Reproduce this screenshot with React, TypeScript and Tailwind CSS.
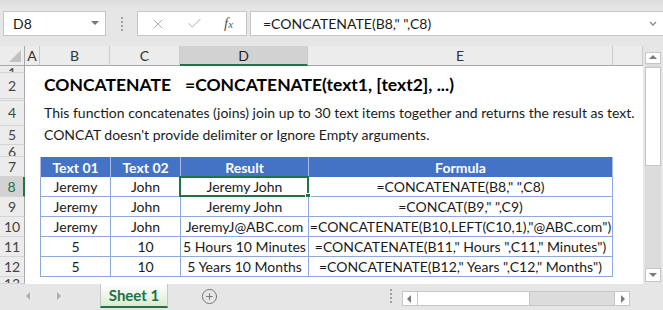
import { Check, X, CirclePlus } from "lucide-react";
import type { ReactNode } from "react";

const cols = [
  { key: "A", w: "w-[15px]" },
  { key: "B", w: "w-[70px]" },
  { key: "C", w: "w-[70px]" },
  { key: "D", w: "w-[128px]" },
  { key: "E", w: "w-[305px]" },
  { key: "", w: "w-[30px]" },
];

const rows = [
  { b: "Jeremy", c: "John", d: "Jeremy John", e: '=CONCATENATE(B8," ",C8)' },
  { b: "Jeremy", c: "John", d: "Jeremy John", e: '=CONCAT(B9," ",C9)' },
  { b: "Jeremy", c: "John", d: "JeremyJ@ABC.com", e: '=CONCATENATE(B10,LEFT(C10,1),"@ABC.com")' },
  { b: "5", c: "10", d: "5 Hours 10 Minutes", e: '=CONCATENATE(B11," Hours ",C11," Minutes")' },
  { b: "5", c: "10", d: "5 Years 10 Months", e: '=CONCATENATE(B12," Years ",C12," Months")' },
];

function Tri({ dir }: { dir: "up" | "down" | "left" | "right" }) {
  const pts = {
    up: "1,6 5,2 9,6",
    down: "1,3 5,7 9,3",
    left: "6,1 2,5 6,9",
    right: "4,1 8,5 4,9",
  }[dir];
  return (
    <svg width="10" height="10" viewBox="0 0 10 10">
      <polygon points={pts} fill="#7a7a7a" />
    </svg>
  );
}

// row header + cells; short rows show only part of their number, as Excel does
function SheetRow({
  num,
  h,
  selected,
  clip,
  children,
}: {
  num: string;
  h: string;
  selected?: boolean;
  clip?: "top" | "bottom";
  children?: ReactNode;
}) {
  const align = clip === "top" ? "items-start" : clip === "bottom" ? "items-end" : "items-center";
  return (
    <div className={`flex ${h} shrink-0`}>
      <div
        className={`w-[25px] shrink-0 flex ${align} justify-center overflow-hidden border-b border-[#d4d4d4] text-[14px] ${
          selected
            ? "bg-[#d2d2d2] border-r-2 border-r-[#217346] text-[#217346]"
            : "bg-[#ececec] border-r border-r-[#a8a8a8] text-[#444]"
        }`}
      >
        <span className={clip ? "leading-[14px] h-full overflow-hidden" : "leading-none"}>{num}</span>
      </div>
      <div className="flex-1 flex bg-white relative">{children}</div>
    </div>
  );
}

function TableCell({
  w,
  children,
  head,
  last,
}: {
  w: string;
  children: ReactNode;
  head?: boolean;
  last?: boolean;
}) {
  return (
    <div
      className={`${w} shrink-0 flex items-center justify-center whitespace-nowrap border-l ${
        last ? "border-r" : ""
      } ${
        head
          ? "bg-[#4472c4] text-white font-bold border-[#a9bde4]"
          : "border-b border-[#8ea9db] text-[#1a1a1a]"
      }`}
    >
      {children}
    </div>
  );
}

export default function App() {
  return (
    <div className="w-[663px] h-[310px] overflow-hidden bg-[#e6e6e6] flex flex-col font-['Lato',sans-serif] text-[#1a1a1a]">
      {/* formula bar */}
      <div className="h-[46px] shrink-0 flex items-start pt-[11px] pl-[3px] bg-linear-to-b from-[#dcdcdc] to-[#e6e6e6] to-[20%]">
        <div className="w-[103px] h-[25px] bg-white border border-[#c6c6c6] flex items-center pl-[9px] pr-[6px] text-[14px]">
          <span className="flex-1">D8</span>
          <svg width="8" height="5" viewBox="0 0 8 5">
            <polygon points="0,0 8,0 4,4" fill="#777" />
          </svg>
        </div>
        <div className="w-[31px] h-[25px] flex flex-col items-center justify-center gap-[2px]">
          <span className="w-[2px] h-[2px] bg-[#a0a0a0]" />
          <span className="w-[2px] h-[2px] bg-[#a0a0a0]" />
          <span className="w-[2px] h-[2px] bg-[#a0a0a0]" />
          <span className="w-[2px] h-[2px] bg-[#a0a0a0]" />
        </div>
        <div className="w-[110px] h-[25px] bg-white border border-[#c6c6c6] flex items-center pl-[12px]">
          <X size={16} strokeWidth={1.4} className="text-[#a8a8a8]" />
          <Check size={17} strokeWidth={1.4} className="text-[#a8a8a8] ml-[20px]" />
          <span className="ml-[21px] font-['Liberation_Serif',serif] italic text-[15px] text-[#555]">
            f<span className="text-[11px]">x</span>
          </span>
        </div>
        <div className="ml-[3px] flex-1 h-[25px] bg-white border border-[#c6c6c6] border-r-0 flex items-center pl-[12px] pr-[6px] text-[14px]">
          <span className="flex-1 whitespace-pre">=CONCATENATE(B8," ",C8)</span>
          <svg width="8" height="6" viewBox="0 0 8 6">
            <polyline points="1,1 4,4 7,1" fill="none" stroke="#888" strokeWidth="1.3" />
          </svg>
        </div>
      </div>

      {/* sheet area */}
      <div className="h-[238px] shrink-0 flex">
        <div className="w-[643px] shrink-0 flex flex-col overflow-hidden">
          {/* column headers */}
          <div className="h-[20px] shrink-0 flex bg-[#ececec] text-[14px] text-[#333]">
            <div className="w-[25px] shrink-0 border-r border-b border-[#a8a8a8] flex items-end justify-end p-[3px]">
              <svg width="12" height="12" viewBox="0 0 12 12">
                <polygon points="12,0 12,12 0,12" fill="#c2c2c2" />
              </svg>
            </div>
            {cols.map((c) => (
              <div
                key={c.key + c.w}
                className={`${c.w} shrink-0 flex items-center justify-center border-r border-[#cbcbcb] ${
                  c.key === "D"
                    ? "bg-[#d2d2d2] border-b-2 border-b-[#217346] text-[#1e1e1e]"
                    : "border-b border-b-[#a8a8a8]"
                }`}
              >
                {c.key}
              </div>
            ))}
          </div>

          <SheetRow num="1" h="h-[7px]" clip="bottom" />
          <SheetRow num="2" h="h-[26px]">
            <div className="w-[15px] shrink-0" />
            <div className="w-[140px] shrink-0 flex items-end pl-[4px] pb-[1px] text-[17.5px] font-bold text-black">
              CONCATENATE
            </div>
            <div className="flex items-end pl-[5px] pb-[1px] text-[17.5px] font-bold text-black whitespace-nowrap">
              =CONCATENATE(text1, [text2], ...)
            </div>
          </SheetRow>
          <SheetRow num="3" h="h-[2px]" clip="bottom" />
          <SheetRow num="4" h="h-[25px]">
            <div className="w-[15px] shrink-0" />
            <div className="flex items-end pl-[4px] pb-[3px] text-[14px] whitespace-nowrap">
              This function concatenates (joins) join up to 30 text items together and returns the result as text.
            </div>
          </SheetRow>
          <SheetRow num="5" h="h-[19px]">
            <div className="w-[15px] shrink-0" />
            <div className="flex items-end pl-[4px] text-[14px] whitespace-nowrap">
              CONCAT doesn't provide delimiter or Ignore Empty arguments.
            </div>
          </SheetRow>
          <SheetRow num="6" h="h-[12px]" clip="top" />
          <SheetRow num="7" h="h-[20px]">
            <div className="w-[15px] shrink-0" />
            <div className="flex text-[14px]">
              <TableCell w="w-[70px]" head>Text 01</TableCell>
              <TableCell w="w-[70px]" head>Text 02</TableCell>
              <TableCell w="w-[128px]" head>Result</TableCell>
              <TableCell w="w-[305px]" head last>Formula</TableCell>
            </div>
          </SheetRow>
          {rows.map((r, i) => (
            <SheetRow key={i} num={String(i + 8)} h="h-[20px]" selected={i === 0}>
              <div className="w-[15px] shrink-0" />
              <div className="flex text-[14px]">
                <TableCell w="w-[70px]">{r.b}</TableCell>
                <TableCell w="w-[70px]">{r.c}</TableCell>
                <TableCell w="w-[128px]">{r.d}</TableCell>
                <TableCell w="w-[305px]" last>
                  <span className="whitespace-pre">{r.e}</span>
                </TableCell>
              </div>
              {i === 0 && (
                <div className="absolute left-[154px] top-[-1px] w-[130px] h-[21px] border-2 border-[#217346] pointer-events-none">
                  <span className="absolute right-[-4px] bottom-[-4px] w-[6px] h-[6px] bg-[#217346] border border-white" />
                </div>
              )}
            </SheetRow>
          ))}
          <SheetRow num="13" h="h-[7px]" clip="top" />
        </div>

        {/* vertical scrollbar */}
        <div className="w-[20px] shrink-0 flex flex-col pl-[2px] pt-[6px] pb-[2px]">
          <div className="w-[16px] h-[12px] bg-white border border-[#c6c6c6] flex items-center justify-center">
            <Tri dir="up" />
          </div>
          <div className="flex-1 flex flex-col pt-[3px] bg-[#dcdcdc] w-[16px]">
            <div className="h-[99px] bg-white border border-[#c6c6c6]" />
          </div>
          <div className="w-[16px] h-[14px] bg-white border border-[#c6c6c6] flex items-center justify-center">
            <Tri dir="down" />
          </div>
        </div>
      </div>

      {/* sheet tabs */}
      <div className="h-[26px] shrink-0 flex items-start">
        <div className="w-[100px] h-[24px] flex items-center pl-[24px] gap-[19px] opacity-50">
          <Tri dir="left" />
          <Tri dir="right" />
        </div>
        <div className="w-[68px] h-[24px] bg-linear-to-b from-white to-[#dcebd2] border-x border-[#c6c6c6] border-b-2 border-b-[#217346] flex items-center justify-center text-[15px] font-bold text-[#217346]">
          Sheet 1
        </div>
        <div className="w-[82px] h-[24px] flex items-center justify-center">
          <CirclePlus size={17} strokeWidth={1.4} className="text-[#777]" />
        </div>
        <div className="w-[152px] h-[24px] flex flex-col items-center justify-center gap-[2px] pl-[130px]">
          <span className="w-[2px] h-[2px] bg-[#a0a0a0]" />
          <span className="w-[2px] h-[2px] bg-[#a0a0a0]" />
          <span className="w-[2px] h-[2px] bg-[#a0a0a0]" />
          <span className="w-[2px] h-[2px] bg-[#a0a0a0]" />
        </div>
        <div className="mt-[7px] w-[228px] h-[15px] flex border border-[#c6c6c6] bg-[#dcdcdc]">
          <div className="w-[15px] bg-white border-r border-[#c6c6c6] flex items-center justify-center">
            <Tri dir="left" />
          </div>
          <div className="w-[112px] bg-white border-r border-[#c6c6c6]" />
          <div className="flex-1" />
          <div className="w-[15px] bg-white border-l border-[#c6c6c6] flex items-center justify-center">
            <Tri dir="right" />
          </div>
        </div>
      </div>
    </div>
  );
}
